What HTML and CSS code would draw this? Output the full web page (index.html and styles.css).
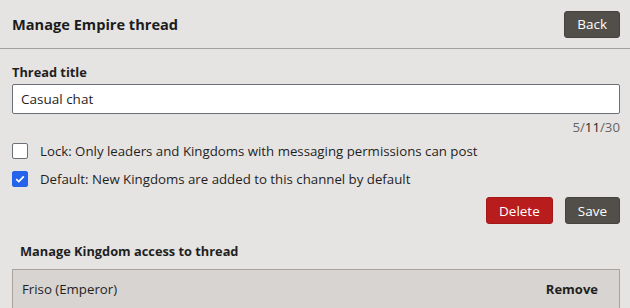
FILE: index.html
```html
<!doctype html>
<html lang="en">
<head>
<meta charset="UTF-8">
<title>Manage Empire thread</title>
<link rel="stylesheet" href="styles.css">
</head>
<body>
	<div class="header">
		<h2 class="title">Manage Empire thread</h2>
		<button class="btn btn_dark">Back</button>
	</div>

	<div class="content">
		<label class="field_label" for="thread_title">Thread title</label>
		<input type="text" id="thread_title" class="text_input" value="Casual chat">
		<div class="counter">5/<b>11</b>/30</div>

		<label class="check_row">
			<span class="check_box"></span>
			<span>Lock: Only leaders and Kingdoms with messaging permissions can post</span>
		</label>
		<label class="check_row">
			<span class="check_box checked">
				<svg width="10" height="8" viewBox="0 0 10 8"><path d="M1.2 4.2 L3.8 6.6 L8.8 1.4" fill="none" stroke="#fff" stroke-width="1.8"/></svg>
			</span>
			<span>Default: New Kingdoms are added to this channel by default</span>
		</label>

		<div class="actions">
			<button class="btn btn_red">Delete</button>
			<button class="btn btn_dark">Save</button>
		</div>

		<h3 class="sub_title">Manage Kingdom access to thread</h3>
		<table class="access_table">
			<tr>
				<td>Friso (Emperor)</td>
				<td class="remove">Remove</td>
			</tr>
		</table>
	</div>
</body>
</html>
```

FILE: styles.css
```css
html, body{
	margin:0; padding:0;
}
body{
	background-color:#e6e4e2;
	font-family:"Open Sans", "Noto Sans", sans-serif;
	font-size:13.25px; line-height:18px;
	color:#1f1f1f;
	overflow:hidden;
}
.header{
	display:flex; align-items:center; justify-content:space-between;
	height:48px;
	padding:0 10px 0 12px;
	border-bottom:1px solid #a3a19e;
}
.title{
	margin:0; font-size:14.6px; font-weight:700; color:#1c1c1c;
}
.btn{
	border:none; border-radius:3px;
	font-family:inherit; font-size:13.5px;
	color:#ffffff; height:27px; padding:0 12px;
}
.btn_dark{
	background-color:#524f4a; border:1px solid #46433f;
}
.btn_red{
	background-color:#b91c1c; border:1px solid #a51818;
}
.content{
	padding:14px 10px 0 12px;
}
.field_label{
	display:block; font-weight:700; font-size:12.8px; margin-bottom:3px;
}
.text_input{
	display:block; box-sizing:border-box; width:100%;
	height:30px; padding:0 8px;
	border:1px solid #6b7078; border-radius:2px;
	font-family:inherit; font-size:13.5px; color:#1f1f1f;
	background:#ffffff;
}
.counter{
	text-align:right; color:#666462; margin:4px 0 1px;
}
.counter b{
	font-weight:400; color:#1f1f1f;
}
.check_row{
	display:flex; align-items:center; gap:12px;
	height:28px;
}
.check_box{
	box-sizing:border-box; width:16px; height:16px;
	border:1px solid #6b7078; border-radius:2px; background:#ffffff;
	display:flex; align-items:center; justify-content:center;
}
.check_box.checked{
	background:#2563eb; border-color:#2563eb;
}
.actions{
	display:flex; justify-content:flex-end; gap:12px;
	margin-top:4px;
}
.sub_title{
	margin:18px 0 9px 8px; font-size:12.8px; font-weight:700;
}
.access_table{
	width:100%; border-collapse:collapse;
	background:#d7d4d1;
	border:1px solid #a8a39e;
}
.access_table td{
	padding:9px 9px; height:20px;
	border-bottom:1px solid #a8a39e;
}
.access_table .remove{
	text-align:right; font-weight:700; font-size:13px; padding-right:21px;
}
```
